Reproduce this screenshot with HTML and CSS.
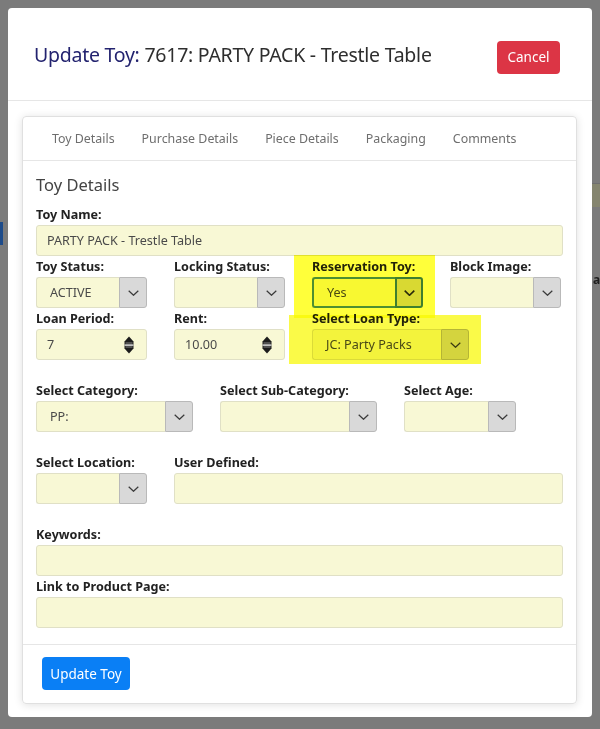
FILE: index.html
```html
<!DOCTYPE html>
<html>
<head>
<meta charset="utf-8">
<title>Update Toy</title>
<link rel="stylesheet" href="styles.css">
</head>
<body>
<div class="page">
  <div class="page-left"><span class="page-tab"></span></div>
  <div class="page-right">
    <div class="page-band"></div>
    <div class="page-text">ai</div>
  </div>
</div>

<div class="modal">
  <div class="modal-header">
    <h1 class="modal-title"><span class="title-key">Update Toy:</span> 7617: PARTY PACK - Trestle Table</h1>
    <button class="btn btn-cancel">Cancel</button>
  </div>
  <div class="modal-body">
    <div class="card">
      <div class="card-header">
        <span class="tab">Toy Details</span>
        <span class="tab">Purchase Details</span>
        <span class="tab">Piece Details</span>
        <span class="tab">Packaging</span>
        <span class="tab">Comments</span>
      </div>
      <div class="card-body">
        <h2 class="section-title">Toy Details</h2>

        <div class="row">
          <div class="field grow">
            <label>Toy Name:</label>
            <div class="input">PARTY PACK - Trestle Table</div>
          </div>
        </div>

        <div class="row">
          <div class="field w111">
            <label>Toy Status:</label>
            <div class="select"><div class="select-value">ACTIVE</div><div class="select-btn"><svg width="11" height="6" viewBox="0 0 11 6"><path d="M0.7 0.7 L5.5 5.3 L10.3 0.7" fill="none" stroke="#3a3a3a" stroke-width="1.2"/></svg></div></div>
          </div>
          <div class="field w111">
            <label>Locking Status:</label>
            <div class="select"><div class="select-value"></div><div class="select-btn"><svg width="11" height="6" viewBox="0 0 11 6"><path d="M0.7 0.7 L5.5 5.3 L10.3 0.7" fill="none" stroke="#3a3a3a" stroke-width="1.2"/></svg></div></div>
          </div>
          <div class="field w111">
            <label>Reservation Toy:</label>
            <div class="select focus"><div class="select-value">Yes</div><div class="select-btn"><svg width="11" height="6" viewBox="0 0 11 6"><path d="M0.7 0.7 L5.5 5.3 L10.3 0.7" fill="none" stroke="#2a2a2a" stroke-width="1.6"/></svg></div></div>
          </div>
          <div class="field w111">
            <label>Block Image:</label>
            <div class="select"><div class="select-value"></div><div class="select-btn"><svg width="11" height="6" viewBox="0 0 11 6"><path d="M0.7 0.7 L5.5 5.3 L10.3 0.7" fill="none" stroke="#3a3a3a" stroke-width="1.2"/></svg></div></div>
          </div>
        </div>

        <div class="row">
          <div class="field w111">
            <label>Loan Period:</label>
            <div class="input number"><span>7</span><svg class="spin" width="10" height="18" viewBox="0 0 10 18"><path d="M5 0.5 L9.5 5.5 L9.5 12.5 L5 17.5 L0.5 12.5 L0.5 5.5 Z" fill="#1c1c1c"/><rect x="1.5" y="6" width="7" height="6" fill="#505050"/><rect x="0.5" y="8.5" width="9" height="1.2" fill="#f2f2f2"/></svg></div>
          </div>
          <div class="field w111">
            <label>Rent:</label>
            <div class="input number"><span>10.00</span><svg class="spin" width="10" height="18" viewBox="0 0 10 18"><path d="M5 0.5 L9.5 5.5 L9.5 12.5 L5 17.5 L0.5 12.5 L0.5 5.5 Z" fill="#1c1c1c"/><rect x="1.5" y="6" width="7" height="6" fill="#505050"/><rect x="0.5" y="8.5" width="9" height="1.2" fill="#f2f2f2"/></svg></div>
          </div>
          <div class="field w157">
            <label>Select Loan Type:</label>
            <div class="select"><div class="select-value">JC: Party Packs</div><div class="select-btn"><svg width="11" height="6" viewBox="0 0 11 6"><path d="M0.7 0.7 L5.5 5.3 L10.3 0.7" fill="none" stroke="#3a3a3a" stroke-width="1.2"/></svg></div></div>
          </div>
        </div>

        <div class="row spaced">
          <div class="field w157">
            <label>Select Category:</label>
            <div class="select"><div class="select-value">PP:</div><div class="select-btn"><svg width="11" height="6" viewBox="0 0 11 6"><path d="M0.7 0.7 L5.5 5.3 L10.3 0.7" fill="none" stroke="#3a3a3a" stroke-width="1.2"/></svg></div></div>
          </div>
          <div class="field w157">
            <label>Select Sub-Category:</label>
            <div class="select"><div class="select-value"></div><div class="select-btn"><svg width="11" height="6" viewBox="0 0 11 6"><path d="M0.7 0.7 L5.5 5.3 L10.3 0.7" fill="none" stroke="#3a3a3a" stroke-width="1.2"/></svg></div></div>
          </div>
          <div class="field w112">
            <label>Select Age:</label>
            <div class="select"><div class="select-value"></div><div class="select-btn"><svg width="11" height="6" viewBox="0 0 11 6"><path d="M0.7 0.7 L5.5 5.3 L10.3 0.7" fill="none" stroke="#3a3a3a" stroke-width="1.2"/></svg></div></div>
          </div>
        </div>

        <div class="row spaced">
          <div class="field w111">
            <label>Select Location:</label>
            <div class="select"><div class="select-value"></div><div class="select-btn"><svg width="11" height="6" viewBox="0 0 11 6"><path d="M0.7 0.7 L5.5 5.3 L10.3 0.7" fill="none" stroke="#3a3a3a" stroke-width="1.2"/></svg></div></div>
          </div>
          <div class="field grow">
            <label>User Defined:</label>
            <div class="input"></div>
          </div>
        </div>

        <div class="row spaced">
          <div class="field grow">
            <label>Keywords:</label>
            <div class="input"></div>
          </div>
        </div>

        <div class="row">
          <div class="field grow">
            <label>Link to Product Page:</label>
            <div class="input"></div>
          </div>
        </div>

        <div class="highlight hl-reservation"></div>
        <div class="highlight hl-loantype"></div>
      </div>
      <div class="card-footer">
        <button class="btn btn-primary">Update Toy</button>
      </div>
    </div>
  </div>
</div>
</body>
</html>
```

FILE: styles.css
```css
* { box-sizing: border-box; }

html, body { margin: 0; padding: 0; }

body {
  width: 600px;
  height: 729px;
  overflow: hidden;
  position: relative;
  background: #7b7b7b;
  font-family: "Noto Sans", "Open Sans", sans-serif;
}

/* background page peeking behind the backdrop */
.page {
  display: flex;
  justify-content: space-between;
  height: 729px;
}
.page-left { padding-top: 222px; }
.page-tab { display: block; width: 3px; height: 23px; background: #1d4b8a; }
.page-right { width: 8px; padding-top: 183px; overflow: hidden; }
.page-band { height: 24px; background: #85856f; border-top: 1px solid #6f6f6f; }
.page-text { margin-top: 64px; font-size: 12px; font-weight: 700; color: #1e1e1e; padding-left: 1px; white-space: nowrap; }

/* modal */
.modal {
  position: absolute;
  top: 8px;
  left: 8px;
  width: 584px;
  height: 709px;
  background: #fff;
  border-radius: 4px;
  display: flex;
  flex-direction: column;
}

.modal-header {
  height: 93px;
  flex: none;
  display: flex;
  align-items: center;
  justify-content: space-between;
  padding: 0 32px 0 26px;
  border-bottom: 1px solid #e6e6e6;
}

.modal-title {
  margin: 0;
  font-size: 19.5px;
  font-weight: 400;
  color: #2e2e2e;
  letter-spacing: -0.25px;
}
.title-key { color: #23236f; }

.btn {
  font-family: inherit;
  border: none;
  border-radius: 4px;
  color: #fff;
  font-size: 13.5px;
  padding: 0;
}
.btn-cancel { width: 63px; height: 33px; margin-top: 6px; background: #dc3545; }
.btn-primary { width: 88px; height: 33px; background: #0a7ff5; }

.modal-body {
  flex: 1;
  display: flex;
  padding: 15px 15px 14px 14px;
}

.card {
  flex: 1;
  display: flex;
  flex-direction: column;
  border: 1px solid #e0e0e0;
  border-radius: 4px;
  box-shadow: 0 1px 8px rgba(0, 0, 0, 0.12);
}

.card-header {
  height: 44px;
  flex: none;
  display: flex;
  align-items: center;
  gap: 27px;
  padding-left: 29px;
  border-bottom: 1px solid #e6e6e6;
}
.tab { font-size: 12.4px; color: #6e6e6e; }

.card-body {
  flex: 1;
  position: relative;
  padding: 12px 13px 13px 13px;
}

.section-title {
  margin: 0 0 10px 0;
  font-size: 16.5px;
  line-height: 24px;
  font-weight: 400;
  color: #444;
}

.row { display: flex; gap: 27px; }
.row.spaced { margin-top: 20px; }

.field { margin-bottom: 3px; }
.field label {
  display: block;
  font-size: 12.6px;
  line-height: 15px;
  font-weight: 700;
  color: #222;
  margin-bottom: 3px;
  white-space: nowrap;
}
.grow { flex: 1; }
.w111 { width: 111px; }
.w112 { width: 112px; }
.w157 { width: 157px; }

.input {
  height: 31px;
  display: flex;
  align-items: center;
  padding-left: 10px;
  background: #f8f8d5;
  border: 1px solid #e0e0c6;
  border-radius: 3px;
  font-size: 12.6px;
  color: #4a4a4a;
}
.input.number { justify-content: space-between; padding-right: 12px; }
.spin { display: block; }

.select { display: flex; height: 31px; }
.select-value {
  flex: 1;
  display: flex;
  align-items: center;
  padding-left: 13px;
  background: #f8f8d5;
  border: 1px solid #e0e0c6;
  border-right: none;
  border-radius: 3px 0 0 3px;
  font-size: 12.6px;
  color: #4a4a4a;
}
.select-btn {
  width: 28px;
  display: flex;
  align-items: center;
  justify-content: center;
  background: #d9d9d9;
  border: 1px solid #b9b9b9;
  border-radius: 0 3px 3px 0;
}
.select.focus .select-value { border: 2px solid #4d8fd6; border-right: none; }
.select.focus .select-btn { border: 2px solid #3f7fc8; }

/* annotation highlights */
.highlight {
  position: absolute;
  background: #ffff3a;
  mix-blend-mode: multiply;
}
.hl-reservation { left: 271px; top: 94px; width: 141px; height: 63px; }
.hl-loantype { left: 266px; top: 154px; width: 192px; height: 49px; background: #fafa48; }

.card-footer {
  flex: none;
  height: 59px;
  padding: 12px 19px;
  border-top: 1px solid #e6e6e6;
}
```
